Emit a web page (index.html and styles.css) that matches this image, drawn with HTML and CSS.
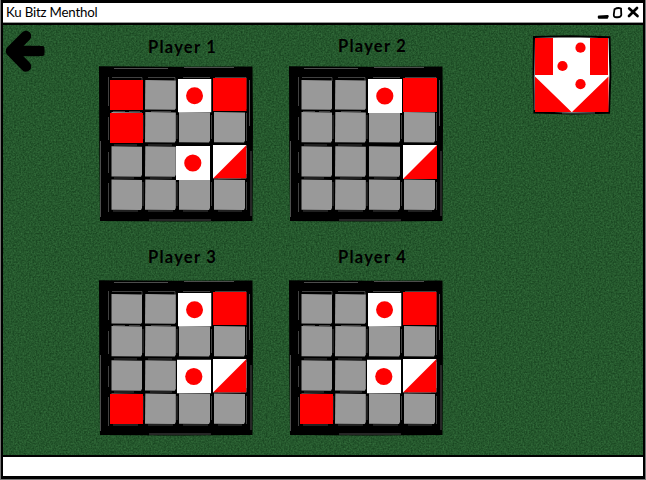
FILE: index.html
```html
<!DOCTYPE html>
<html lang="en">
<head>
<meta charset="utf-8">
<title>Ku Bitz Menthol</title>
<link rel="stylesheet" href="styles.css">
</head>
<body>
<svg class="defs" width="0" height="0" aria-hidden="true">
  <defs>
    <filter id="felt" x="0" y="0" width="100%" height="100%" color-interpolation-filters="sRGB">
      <feTurbulence type="fractalNoise" baseFrequency="0.6" numOctaves="2" seed="4"/>
      <feColorMatrix values="0.16 0 0 0 0.065  0.24 0 0 0 0.225  0.16 0 0 0 0.095  0 0 0 0 1"/>
    </filter>
    <symbol id="board" viewBox="0 0 154 156">
      <path d="M0 0.3L80 0.8L153.500 0.400L154 60L153.500 155L80 155.500L1 155L0.300 80Z"/>
      <g fill="#999">
        <path d="M12.500 14l30.500 .4v28l-1 1.300-29.500-.2z"/><path d="M46.300 14l30.500 .4v28l-1 1.300-29.800-.2z"/>
        <path d="M80 14l31 .4v28l-1 1.300-30-.2z"/><path d="M115 14l31 .4v28l-1 1.300-30-.2z"/>
        <path d="M12.500 46l30.500 .4v28l-1 2-29.500-.2z"/><path d="M46.300 46l30.500 .4v28l-1 2-29.800-.2z"/>
        <path d="M80 46l31 .4v28l-1 2-30-.2z"/><path d="M115 46l31 .4v28l-1 2-30-.2z"/>
        <path d="M12.500 80.300l30.500 .4v28l-1 2-29.500-.2z"/><path d="M46.300 80.300l30.500 .4v28l-1 2-29.800-.2z"/>
        <path d="M80 80.300l31 .4v28l-1 2-30-.2z"/><path d="M115 80.300l31 .4v28l-1 2-30-.2z"/>
        <path d="M12.500 113.500l30.500 .4v28l-1 2-29.500-.2z"/><path d="M46.300 113.500l30.500 .4v28l-1 2-29.800-.2z"/>
        <path d="M80 113.500l31 .4v28l-1 2-30-.2z"/><path d="M115 113.500l31 .4v28l-1 2-30-.2z"/>
      </g>
      <g fill="none" stroke="#888" stroke-width=".8">
        <path d="M13 11.500H43V15M49 11.500H76V15M84 11.500H111M116 11.500H147V43M9.500 11V40M9.500 51V74M9.500 86V107M9.500 117V146M14 45.500H26M30 45.500H41M52 45.500H72M15 79H38M49 79H73M15 112H35M51 112H73M85 112H108M119 112H142M14 145H39M49 145H74M84 145H109M119 145H143M147.500 47V75M147.500 82V108M147.500 116V144M44 49V73M78 49V73M112.500 49V73M44 116V140M78 116V140M112.500 116V140" opacity=".6"/>
        <path d="M15 2.500H69M85 1.500H135M150.500 14V60M152 85V150M1.500 75V151M50 154H112" opacity=".7"/>
      </g>
    </symbol>
    <symbol id="dot" viewBox="0 0 34 34"><path fill="#fff" d="M0 0H34V34H0z"/><circle cx="16.800" cy="17" r="8.600" fill="red"/></symbol>
    <symbol id="split" viewBox="0 0 34 34"><path fill="#fff" d="M0 0H34V34H0z"/><path fill="red" d="M34 0V34H0z"/></symbol>
  </defs>
</svg>

<div class="window">
  <header class="titlebar">
    <h1 class="title">Ku Bitz Menthol</h1>
    <svg class="controls" width="44" height="18" viewBox="0 0 44 18" aria-hidden="true" fill="none" stroke="#000" stroke-linecap="round">
      <path d="M2 13.800L10.500 13.300M2 14.500L10 14.500" stroke-width="2.500"/>
      <path d="M17.500 6.200Q21 4.200 24 5.500L24.300 12Q23.500 14.500 20 14.200Q16.500 14.700 16.800 11.500Z" stroke-width="1.800"/>
      <path d="M32.200 5.500L40.500 13M40 5L32 13" stroke-width="2.700"/>
    </svg>
  </header>

  <main class="table">
    <svg class="felt" width="640" height="430" aria-hidden="true"><rect width="640" height="430" filter="url(#felt)"/></svg>
    <div class="back">
      <svg width="42" height="44" viewBox="0 0 42 44" fill="none" stroke="#000" stroke-width="10.500" stroke-linecap="round" stroke-linejoin="round">
        <path d="M23 7L8 22L23 37.500"/><path d="M9 22H36"/><path d="M36 17H39.500Q41.500 17 41.500 19V25Q41.500 27 39.500 27H36Z" fill="#000" stroke="none"/>
      </svg>
    </div>
    <div class="players">
      <section class="player top">
        <h2 class="name">Player 1</h2>
        <svg class="board" width="154" height="156" viewBox="0 0 154 156">
          <use href="#board" width="154" height="156"/>
          <path fill="red" d="M11 14H44V44H11zM11 47H44V77H11zM114 12H147.500V45H114z"/>
          <use href="#dot" x="79" y="13" width="33.500" height="33.500"/>
          <use href="#dot" x="77" y="80" width="34" height="34"/>
          <use href="#split" x="114" y="79" width="33.500" height="33.500"/>
        </svg>
      </section>
      <section class="player top">
        <h2 class="name raised">Player 2</h2>
        <svg class="board" width="154" height="156" viewBox="0 0 154 156">
          <use href="#board" width="154" height="156"/>
          <path fill="red" d="M114 12H148V46H114z"/>
          <use href="#dot" x="79" y="13" width="34" height="34"/>
          <use href="#split" x="114" y="79" width="34" height="34"/>
        </svg>
      </section>
      <section class="player">
        <h2 class="name">Player 3</h2>
        <svg class="board" width="154" height="156" viewBox="0 0 154 156">
          <use href="#board" width="154" height="156"/>
          <path fill="red" d="M11 114H44V144H11zM114 12H147.500V45H114z"/>
          <use href="#dot" x="79" y="13" width="33.500" height="33.500"/>
          <use href="#dot" x="78" y="79.500" width="34" height="34"/>
          <use href="#split" x="114" y="79" width="33.500" height="33.500"/>
        </svg>
      </section>
      <section class="player">
        <h2 class="name">Player 4</h2>
        <svg class="board" width="154" height="156" viewBox="0 0 154 156">
          <use href="#board" width="154" height="156"/>
          <path fill="red" d="M11 114H44V144H11zM114 12H147.500V45H114z"/>
          <use href="#dot" x="79" y="13" width="33.500" height="33.500"/>
          <use href="#dot" x="78" y="79.500" width="34" height="34"/>
          <use href="#split" x="114" y="79" width="33.500" height="33.500"/>
        </svg>
      </section>
    </div>
    <aside class="goal">
      <svg width="80" height="80" viewBox="0 0 80 80">
        <path d="M2 2L39 1.300L77.500 2.300L78.400 40L77 77.700L40 78.500L2.400 77.500L1.500 40Z" fill="#fff" stroke="#000" stroke-width="2"/>
        <path fill="red" d="M3 3H21V40H3zM58 3H76V40H58zM3 41.500L39.500 77H3zM76.500 41.500V77H40z"/>
        <g fill="red"><circle cx="48.500" cy="12.700" r="5.100"/><circle cx="30.500" cy="31" r="5.100"/><circle cx="48.500" cy="49.200" r="5.100"/></g>
        <path d="M2.300 40V75M30 78H63" fill="none" stroke="#777" stroke-width=".8"/>
      </svg>
    </aside>
  </main>
  <footer class="statusbar"></footer>
</div>
</body>
</html>
```

FILE: styles.css
```css
* { box-sizing: border-box; }
body { margin: 0; background: #000; font-family: Lato, "Open Sans", sans-serif; color: #000; }
.defs { position: absolute; }
.window {
  width: 646px;
  height: 480px;
  display: grid;
  grid-template-rows: 20px 430px 19px;
  row-gap: 2px;
  padding: 3px 2px 2px;
  background: #000;
  border: solid #777;
  border-width: 0 1px 1px;
}
.titlebar {
  display: flex;
  align-items: center;
  justify-content: space-between;
  background: #fff;
  border-bottom: 1px solid #999;
  padding: 0 2px 1px 3px;
}
.title { margin: 0; font-size: 13.300px; line-height: 18px; font-weight: 400; letter-spacing: -0.200px; white-space: nowrap; }
.table { position: relative; display: flex; min-width: 0; overflow: hidden; background: #25592e; }
.felt { position: absolute; inset: 0; }
.back { width: 96px; padding: 4px 0 0; flex: none; position: relative; }
.players {
  position: relative;
  display: grid;
  grid-template-columns: 154px 154px;
  grid-auto-rows: 214px;
  column-gap: 36px;
  flex: none;
}
.player { display: flex; flex-direction: column; }
.name {
  margin: 0;
  height: 41px;
  padding: 7px 0 0 13px;
  text-align: center;
  font-size: 16.500px;
  line-height: 22px;
  font-weight: 700;
  letter-spacing: 1.250px;
}
.top .name { padding-top: 11px; }
.top .raised { padding-top: 10px; }
.board { display: block; flex: none; }
.goal { position: relative; margin-left: 89px; padding-top: 10px; flex: none; }
.back svg, .goal svg { display: block; }
.statusbar { background: #fff; }
```
